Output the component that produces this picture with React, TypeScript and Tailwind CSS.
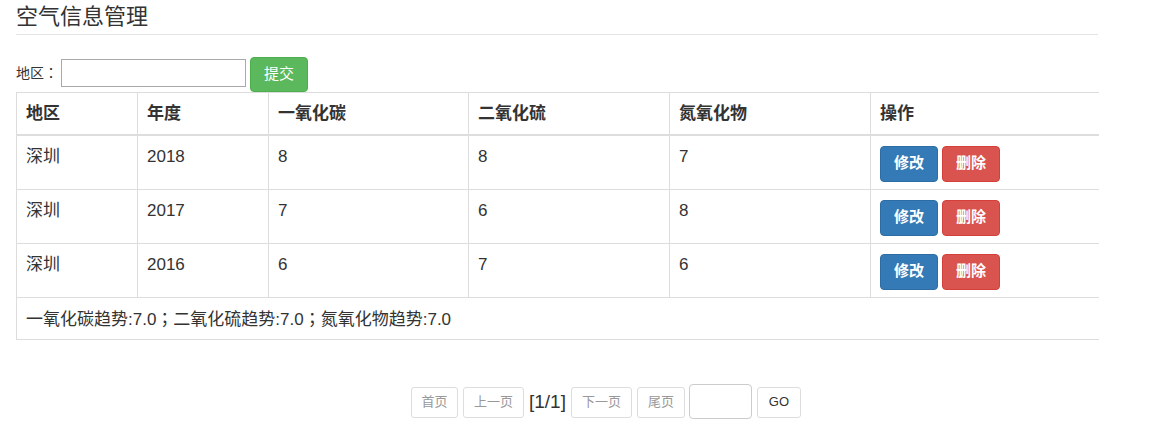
import React from "react";

const rows = [
  { area: "深圳", year: "2018", co: "8", so2: "8", nox: "7" },
  { area: "深圳", year: "2017", co: "7", so2: "6", nox: "8" },
  { area: "深圳", year: "2016", co: "6", so2: "7", nox: "6" },
];

const font = { fontFamily: '"Liberation Sans", "Noto Sans CJK SC", sans-serif' };

function P({ c }: { c: string }) {
  return <span className="[font-family:'Noto_Sans_CJK_JP',sans-serif]">{c}</span>;
}

export default function App() {
  return (
    <div className="w-[1160px] h-[425px] bg-white text-[#333]" style={font}>
      <div className="ml-[16px] w-[1082px]">
        <div className="h-[35px] border-b border-[#e5e5e5] pt-[2px] text-[22px] leading-[30px] text-[#333]">
          空气信息管理
        </div>
        <div className="mt-[22px] flex h-[35px] items-start">
          <span className="mt-[5px] text-[14px] leading-[20px]">
            地区<P c="：" />
          </span>
          <input className="ml-[3px] mt-[2px] h-[28px] w-[185px] border border-[#a9a9a9] bg-white px-1 outline-none" />
          <button className="ml-[4px] h-[35px] w-[58px] rounded-[4px] border border-[#4cae4c] bg-[#5cb85c] text-[15px] text-white">
            提交
          </button>
        </div>
        <table className="w-[1082px] table-fixed border-collapse text-[17px]">
          <colgroup>
            <col className="w-[121px]" />
            <col className="w-[131px]" />
            <col className="w-[200px]" />
            <col className="w-[201px]" />
            <col className="w-[201px]" />
            <col className="w-[228px]" />
          </colgroup>
          <thead>
            <tr className="h-[42px]">
              {["地区", "年度", "一氧化碳", "二氧化硫", "氮氧化物", "操作"].map((h, i) => (
                <th
                  key={h}
                  className={`border-t border-b-2 border-l border-[#ddd] px-[9px] text-left align-middle font-bold leading-[23px] ${
                    i === 5 ? "border-r-0" : "border-r"
                  }`}
                >
                  {h}
                </th>
              ))}
            </tr>
          </thead>
          <tbody>
            {rows.map((r, idx) => (
              <tr key={idx} className="h-[54px]">
                {[r.area, r.year, r.co, r.so2, r.nox].map((v, i) => (
                  <td key={i} className="border border-[#ddd] px-[9px] pt-[11px] align-top leading-[20px]">
                    {v}
                  </td>
                ))}
                <td className="border-t border-b border-l border-[#ddd] px-[9px] pt-[10px] align-top">
                  <div className="flex gap-[4px] pb-[7px]">
                    <button className="h-[36px] w-[58px] rounded-[4px] border border-[#2e6da4] bg-[#337ab7] text-[15px] font-semibold text-white">
                      修改
                    </button>
                    <button className="h-[36px] w-[58px] rounded-[4px] border border-[#d43f3a] bg-[#d9534f] text-[15px] font-semibold text-white">
                      删除
                    </button>
                  </div>
                </td>
              </tr>
            ))}
            <tr className="h-[42px]">
              <td colSpan={6} className="border-t border-b border-l border-[#ddd] px-[9px] align-middle leading-[23px]">
                一氧化碳趋势:7.0<P c="；" />二氧化硫趋势:7.0<P c="；" />氮氧化物趋势:7.0
              </td>
            </tr>
          </tbody>
        </table>
      </div>
      <div className="mt-[44px] flex items-end pl-[411px]">
        <button className="mb-[1px] h-[31px] w-[47px] rounded-[3px] border border-[#ddd] bg-white text-[13px] text-[#999]">首页</button>
        <button className="mb-[1px] ml-[5px] h-[31px] w-[61px] rounded-[3px] border border-[#ddd] bg-white text-[13px] text-[#999]">上一页</button>
        <span className="mb-[5px] ml-[5px] text-[19px] leading-[24px] text-[#333]">[1/1]</span>
        <button className="mb-[1px] ml-[5px] h-[31px] w-[61px] rounded-[3px] border border-[#ddd] bg-white text-[13px] text-[#999]">下一页</button>
        <button className="mb-[1px] ml-[5px] h-[31px] w-[48px] rounded-[3px] border border-[#ddd] bg-white text-[13px] text-[#999]">尾页</button>
        <input className="ml-[4px] h-[35px] w-[63px] rounded-[4px] border border-[#ccc] bg-white outline-none" />
        <button className="mb-[1px] ml-[5px] h-[31px] w-[44px] rounded-[3px] border border-[#ddd] bg-white text-[13px] text-[#333]">GO</button>
      </div>
    </div>
  );
}
